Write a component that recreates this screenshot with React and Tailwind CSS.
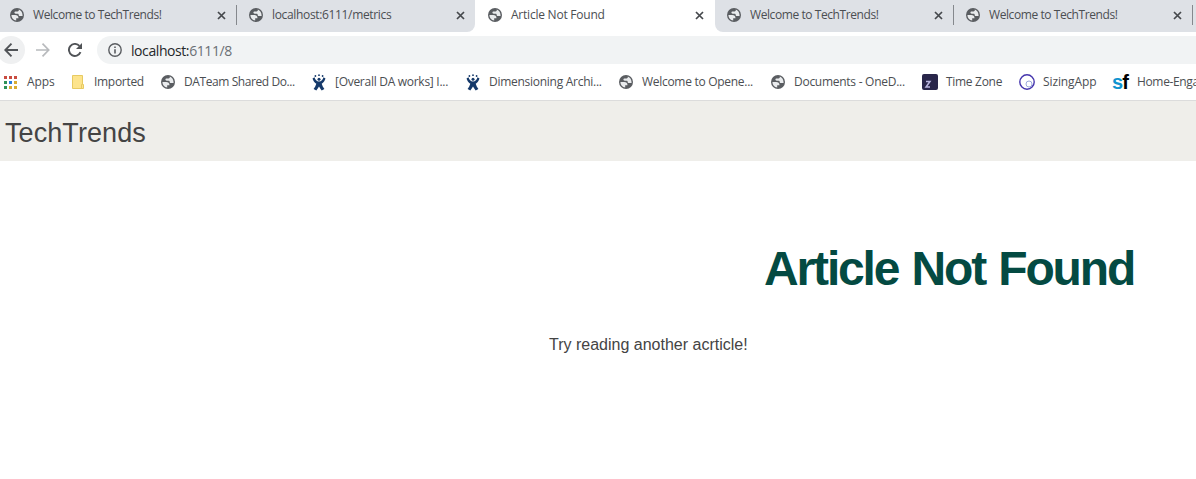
import React from "react";

function Globe() {
  return (
    <svg viewBox="0 0 14 14" className="block h-[14px] w-[14px] shrink-0" aria-hidden="true">
      <circle cx="7" cy="7" r="7" fill="#5a5d61" />
      <path
        d="M1.400 7h3.800c2.100 0 3.300 1.100 3.300 3.200H6.200v2.400C3.400 12.300 1.400 10 1.400 7zM8.800 1.600v.6c0 .7-.5 1.200-1.200 1.200H5.700c-.8 0-1.300.5-1.300 1.200s.5 1.100 1.300 1.100h1.800c.8 0 1.200.4 1.200 1.200 0 .6.400 1 1 1h2.900c.1-3-1.400-5.400-3.800-6.300z"
        fill="#e9ebed"
      />
    </svg>
  );
}

function Close() {
  return (
    <svg viewBox="0 0 9 9" className="block h-[9px] w-[9px] shrink-0" stroke="#45484c" strokeWidth="1.700" aria-hidden="true">
      <path d="M1 1l7 7M8 1l-7 7" />
    </svg>
  );
}

function Jira() {
  return (
    <svg viewBox="0 0 14 17" className="block h-[17px] w-[14px] shrink-0" fill="#15396a" aria-hidden="true">
      <circle cx="3.400" cy="2" r=".9" />
      <circle cx="7" cy="1.200" r=".9" />
      <circle cx="10.600" cy="2" r=".9" />
      <circle cx="7" cy="5.200" r="1.500" />
      <path d="M.5 4.600l2-1.400C3.200 5.600 4.600 7.500 7 7.500s3.800-1.900 4.500-4.300l2 1.400c-.6 2.100-1.900 3.900-3.800 5.200.5 1.900 1.400 3.700 2.700 5.300l-2.700 1.300c-1-1.200-1.900-2.500-2.700-4-.8 1.500-1.700 2.800-2.700 4l-2.700-1.300c1.300-1.600 2.200-3.400 2.700-5.300C2.400 8.500 1.100 6.700.5 4.600z" />
    </svg>
  );
}

function AppsGrid() {
  return (
    <svg viewBox="0 0 13 13" className="block h-[13px] w-[13px] shrink-0" aria-hidden="true">
      <path d="M0 0h3v3H0zM5 0h3v3H5zM10 0h3v3h-3z" fill="#c94b40" />
      <path d="M0 5h3v3H0zM0 10h3v3H0z" fill="#2f9159" />
      <path d="M5 5h3v3H5z" fill="#287de0" />
      <path d="M10 5h3v3h-3zM5 10h3v3H5zM10 10h3v3h-3z" fill="#d9ac32" />
    </svg>
  );
}

function Folder() {
  return (
    <svg viewBox="0 0 12 14" className="block h-[14px] w-[12px] shrink-0" aria-hidden="true">
      <path d="M.5.5h10v9h1v4H.5z" fill="#fde48c" stroke="#e7ca62" />
      <path d="M9.500 13v-3.500h1" fill="none" stroke="#e7ca62" />
    </svg>
  );
}

function ZoneIcon() {
  return (
    <svg viewBox="0 0 16 16" className="block h-4 w-4 shrink-0" aria-hidden="true">
      <rect width="16" height="16" rx="2" fill="#29264a" />
      <path d="M4 7.500h4L4 13h4" fill="none" stroke="#b9b5df" strokeWidth="1.500" />
    </svg>
  );
}

function Sizing() {
  return (
    <svg viewBox="0 0 16 16" className="block h-4 w-4 shrink-0" fill="none" aria-hidden="true">
      <circle cx="8" cy="8" r="7.200" stroke="#4535ad" strokeWidth="1.400" />
      <circle cx="10" cy="10" r="3" stroke="#9ba9dc" />
    </svg>
  );
}

function Sf() {
  return (
    <span className="block w-[17px] shrink-0 font-['Liberation_Sans',sans-serif] text-[20px] leading-4 font-bold tracking-[-1px] text-black">
      <span className="text-[#1093cf]">s</span>f
    </span>
  );
}

function Tab({ title, width, className, textClass }) {
  return (
    <div className={`flex h-8 shrink-0 items-start ${className}`}>
      <span className="pt-2"><Globe /></span>
      <span className={`ml-[9px] shrink-0 pt-[7px] leading-4 whitespace-nowrap ${width} ${textClass}`}>{title}</span>
      <span className="pt-[11px]"><Close /></span>
    </div>
  );
}

function Bookmark({ icon, label, className, textClass }) {
  return (
    <div className={`flex shrink-0 items-center ${className}`}>
      {icon}
      <span className={`whitespace-nowrap ${textClass}`}>{label}</span>
    </div>
  );
}

export default function App() {
  return (
    <div className="h-[479px] w-full overflow-hidden bg-white font-['Open_Sans',sans-serif] text-[12px] text-[#4b4e52]">
      <div className="flex h-8 bg-white">
        <div className="flex w-[475px] shrink-0 rounded-br-[8px] bg-[#dee1e6]">
          <Tab title="Welcome to TechTrends!" width="w-[184px]" className="w-[237px] pl-[10px]" textClass="tracking-[-0.42px]" />
          <div className="-ml-px mt-[5px] h-5 w-px bg-[#85888d]" />
          <Tab title="localhost:6111/metrics" width="w-[184px]" className="w-[238px] pl-[12px]" textClass="tracking-[-0.34px]" />
        </div>
        <Tab title="Article Not Found" width="w-[184px]" className="w-[240px] pl-[13px]" textClass="tracking-[-0.23px]" />
        <div className="flex w-[481px] shrink-0 rounded-bl-[8px] bg-[#dee1e6]">
          <Tab title="Welcome to TechTrends!" width="w-[184px]" className="w-[238px] pl-[12px]" textClass="tracking-[-0.42px]" />
          <div className="mt-[5px] h-5 w-px bg-[#85888d]" />
          <Tab title="Welcome to TechTrends!" width="w-[184px]" className="w-[238px] pl-[12px]" textClass="tracking-[-0.42px]" />
          <div className="mt-[5px] h-5 w-px bg-[#85888d]" />
        </div>
      </div>

      <div className="flex h-8 pt-1">
        <div className="-ml-[3px] flex h-7 w-7 shrink-0 items-center justify-center rounded-full bg-[#eff0f1]">
          <svg viewBox="0 0 14 14" className="h-[14px] w-[14px]" fill="none" stroke="#505357" strokeWidth="1.900">
            <path d="M14 7H1.500M7.500.7L1.300 7l6.200 6.300" />
          </svg>
        </div>
        <div className="ml-[11px] flex h-7 w-[14px] shrink-0 items-center">
          <svg viewBox="0 0 14 14" className="h-[14px] w-[14px]" fill="none" stroke="#b8babd" strokeWidth="1.700">
            <path d="M0 7h12.500M6.500.7L12.700 7l-6.200 6.300" />
          </svg>
        </div>
        <div className="ml-[18px] flex h-7 w-[14px] shrink-0 items-center">
          <svg viewBox="0 0 14 14" className="h-[14px] w-[14px]">
            <path d="M12.500 9.200A6 6 0 1 1 11.400 2.900" fill="none" stroke="#505357" strokeWidth="1.900" />
            <path d="M14 0v6H8z" fill="#505357" />
          </svg>
        </div>
        <div className="ml-[15px] flex h-7 flex-1 items-center rounded-l-full bg-[#f1f3f4] pl-[11px]">
          <svg viewBox="0 0 14 14" className="h-[14px] w-[14px] shrink-0">
            <circle cx="7" cy="7" r="6.200" fill="none" stroke="#5a5d61" strokeWidth="1.400" />
            <path d="M6.200 6.200h1.600v4.300H6.200zM6.200 3.500h1.600v1.500H6.200z" fill="#5a5d61" />
          </svg>
          <span className="ml-[9px] text-[14px] tracking-[-0.42px] text-[#25272a]">
            localhost:<span className="text-[#6b6f74]">6111/8</span>
          </span>
        </div>
      </div>

      <div className="flex h-[37px] border-b border-[#dcdcdc] pl-1">
        <Bookmark icon={<AppsGrid />} label="Apps" className="w-[68px]" textClass="ml-[10px] tracking-[-0.1px]" />
        <Bookmark icon={<Folder />} label="Imported" className="w-[89px]" textClass="ml-[10px] tracking-[-0.3px]" />
        <Bookmark icon={<Globe />} label="DATeam Shared Do..." className="w-[151px]" textClass="ml-[9px] tracking-[-0.41px]" />
        <Bookmark icon={<Jira />} label="[Overall DA works] I..." className="w-[154px]" textClass="ml-[9px] tracking-[-0.28px]" />
        <Bookmark icon={<Jira />} label="Dimensioning Archi..." className="w-[153px]" textClass="ml-[9px] tracking-[-0.27px]" />
        <Bookmark icon={<Globe />} label="Welcome to Opene..." className="w-[152px]" textClass="ml-[9px] tracking-[-0.29px]" />
        <Bookmark icon={<Globe />} label="Documents - OneD..." className="w-[151px]" textClass="ml-[9px] tracking-[-0.27px]" />
        <Bookmark icon={<ZoneIcon />} label="Time Zone" className="w-[97px]" textClass="ml-[8px] tracking-[-0.3px]" />
        <Bookmark icon={<Sizing />} label="SizingApp" className="w-[93px]" textClass="ml-[8px] tracking-[-0.1px]" />
        <Bookmark icon={<Sf />} label="Home-Enga" className="w-[120px]" textClass="ml-[8px] tracking-[-0.35px]" />
      </div>

      <header className="flex h-[60px] items-center bg-[#efeeea] pl-[5px] pt-[5px] font-['Liberation_Sans',sans-serif] text-[27px] tracking-[0.08px] text-[#444]">
        TechTrends
      </header>
      <main className="font-['Liberation_Sans',sans-serif]">
        <h1 className="pt-[80px] pl-[764px] text-[48px] leading-[56px] font-bold tracking-[-2.15px] [word-spacing:2px] whitespace-nowrap text-[#044a42]">Article Not Found</h1>
        <p className="pt-[36px] pl-[549px] text-[16px] leading-6 text-[#444]">Try reading another acrticle!</p>
      </main>
    </div>
  );
}
